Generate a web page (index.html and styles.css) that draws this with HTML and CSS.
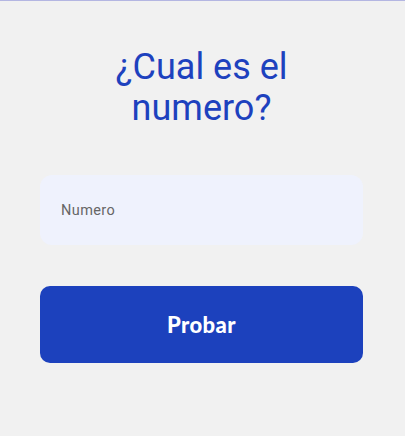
FILE: index.html
```html
<!DOCTYPE html>
<html lang="es">
<head>
<meta charset="utf-8">
<link rel="stylesheet" href="styles.css">
</head>
<body>
<main class="screen">
  <h1 class="title">¿Cual es el<br>numero?</h1>
  <div class="field"><span class="placeholder">Numero</span></div>
  <button class="btn">Probar</button>
</main>
</body>
</html>
```
FILE: styles.css
```css
html, body {
  margin: 0;
  padding: 0;
  background: #f1f1f1;
}
.screen {
  border-top: 1px solid #b4b6e2;
  height: 435px;
  padding: 0 42px 0 40px;
  display: flex;
  flex-direction: column;
  font-family: Roboto, "Noto Sans", sans-serif;
}
.title {
  margin: 46px 0 0;
  text-align: center;
  font-weight: 400;
  font-size: 36px;
  line-height: 41px;
  color: #1d41be;
}
.field {
  margin-top: 46px;
  height: 70px;
  background: #eff2fd;
  border-radius: 12px;
  display: flex;
  align-items: center;
  padding-left: 21px;
}
.placeholder {
  font-size: 14.5px;
  letter-spacing: 0.4px;
  color: #666666;
}
.btn {
  margin-top: 41px;
  height: 77px;
  border: none;
  border-radius: 10px;
  background: #1c41bd;
  color: #fff;
  font-family: Lato, Inter, sans-serif;
  font-weight: 900;
  font-size: 22px;
  letter-spacing: 0.4px;
}
```
